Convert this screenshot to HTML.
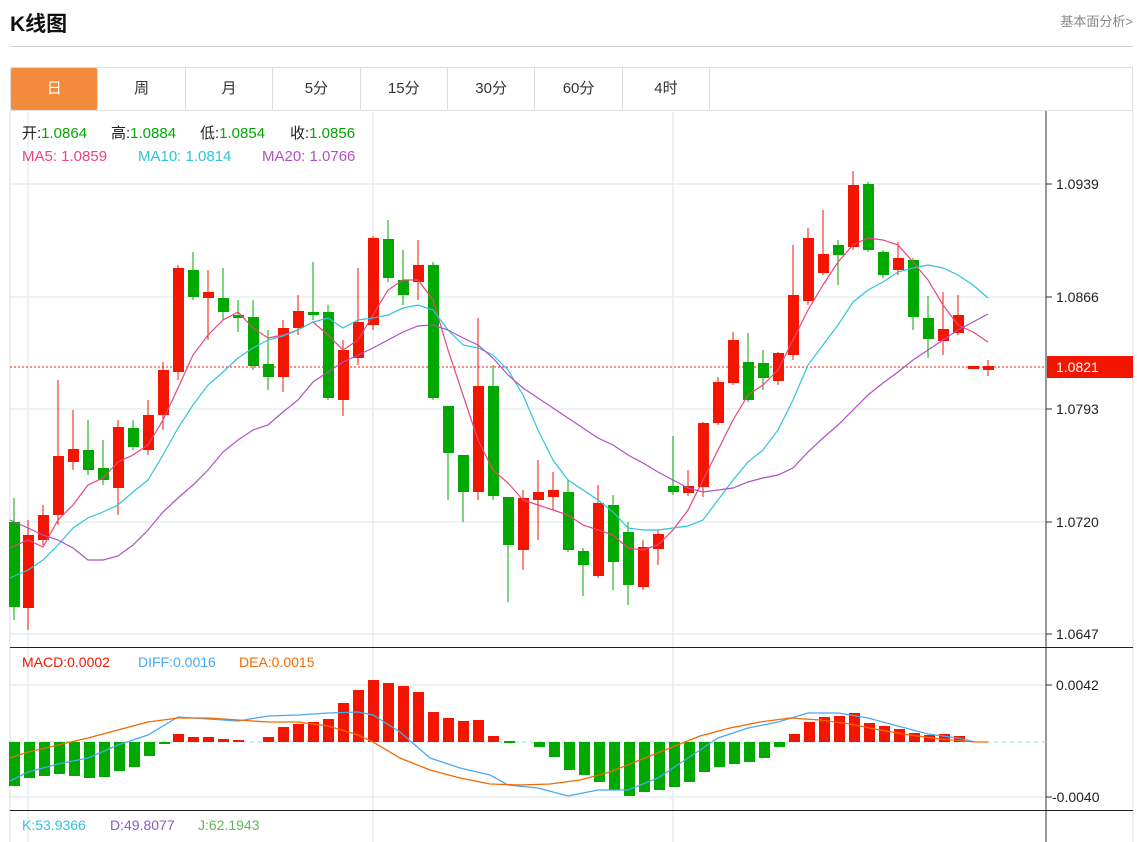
<!DOCTYPE html>
<html><head><meta charset="utf-8"><style>
body{margin:0;width:1137px;height:842px;overflow:hidden;background:#fff;font-family:"Liberation Sans","Noto Sans CJK SC",sans-serif;position:relative}
.t{position:absolute;left:10px;top:8px;font-size:21px;font-weight:bold;color:#111}
.more{position:absolute;right:4px;top:11px;font-size:13px;color:#888}
.hr{position:absolute;left:10px;right:4px;top:46px;border-top:1px solid #d0d0d0}
.tabs{position:absolute;left:10px;top:67px;width:1123px;height:44px;border:1px solid #ddd;border-bottom:1px solid #e2e2e2;box-sizing:border-box;display:flex}
.tabs div{width:87.4px;box-sizing:border-box;border-right:1px solid #ddd;text-align:center;line-height:42px;font-size:15px;color:#333}
.tabs .a{background:#f28b3c;color:#fff;border-radius:2px}
svg{position:absolute;left:0;top:0}
svg text{font-family:"Liberation Sans","Noto Sans CJK SC",sans-serif}
.g rect{fill:#00a800}.g line{stroke:#00a800}
.r rect{fill:#f21500}.r line{stroke:#f21500}
</style></head><body>
<div class="t">K线图</div><div class="more">基本面分析&gt;</div><div class="hr"></div>
<div class="tabs"><div class="a">日</div><div>周</div><div>月</div><div>5分</div><div>15分</div><div>30分</div><div>60分</div><div>4时</div></div>
<svg width="1137" height="842">
<g stroke="#e6edf3" stroke-width="1.5">
<line x1="10" x2="1046" y1="184" y2="184"/><line x1="10" x2="1046" y1="297" y2="297"/><line x1="10" x2="1046" y1="409" y2="409"/><line x1="10" x2="1046" y1="522" y2="522"/><line x1="10" x2="1046" y1="634" y2="634"/>
<line x1="10" x2="1046" y1="685" y2="685"/><line x1="10" x2="1046" y1="797" y2="797"/>
<line x1="28" x2="28" y1="112" y2="842"/><line x1="373" x2="373" y1="112" y2="842"/><line x1="673" x2="673" y1="112" y2="842"/>
</g>
<line x1="10" x2="10" y1="111" y2="842" stroke="#ddd"/>
<line x1="1046" x2="1046" y1="111" y2="842" stroke="#333"/>
<line x1="1133" x2="1133" y1="111" y2="842" stroke="#ddd"/>
<line x1="10" x2="1133" y1="647.5" y2="647.5" stroke="#222"/>
<line x1="10" x2="1133" y1="810.5" y2="810.5" stroke="#222"/>
<g font-size="14" fill="#222">
<line x1="1046" x2="1052" y1="184" y2="184" stroke="#333"/><text x="1056" y="189">1.0939</text>
<line x1="1046" x2="1052" y1="297" y2="297" stroke="#333"/><text x="1056" y="302">1.0866</text>
<line x1="1046" x2="1052" y1="409" y2="409" stroke="#333"/><text x="1056" y="414">1.0793</text>
<line x1="1046" x2="1052" y1="522" y2="522" stroke="#333"/><text x="1056" y="527">1.0720</text>
<line x1="1046" x2="1052" y1="634" y2="634" stroke="#333"/><text x="1056" y="639">1.0647</text>
<line x1="1046" x2="1052" y1="685" y2="685" stroke="#333"/><text x="1056" y="690">0.0042</text>
<line x1="1046" x2="1052" y1="797" y2="797" stroke="#333"/><text x="1052" y="802">-0.0040</text>
</g>
<line x1="10" x2="1046" y1="367" y2="367" stroke="#f21500" stroke-dasharray="2,2"/>
<rect x="1047" y="356" width="86" height="22" fill="#f21500"/><text x="1056" y="372" font-size="14" fill="#fff">1.0821</text>
<g font-size="15">
<text x="22" y="138" fill="#222">开:<tspan fill="#00a800">1.0864</tspan></text>
<text x="111" y="138" fill="#222">高:<tspan fill="#00a800">1.0884</tspan></text>
<text x="200" y="138" fill="#222">低:<tspan fill="#00a800">1.0854</tspan></text>
<text x="290" y="138" fill="#222">收:<tspan fill="#00a800">1.0856</tspan></text>
<text x="22" y="161" fill="#e9457e">MA5: 1.0859</text>
<text x="138" y="161" fill="#2fc4dc">MA10: 1.0814</text>
<text x="262" y="161" fill="#b150c5">MA20: 1.0766</text></g>
<g font-size="14"><text x="22" y="667" fill="#f21500">MACD:0.0002</text><text x="138" y="667" fill="#4aa8f0">DIFF:0.0016</text><text x="239" y="667" fill="#f26a00">DEA:0.0015</text>
<text x="22" y="830" fill="#2fc4dc">K:53.9366</text><text x="110" y="830" fill="#8a5cc6">D:49.8077</text><text x="198" y="830" fill="#5cb85c">J:62.1943</text></g>
<g class="g"><line x1="14" x2="14" y1="498" y2="620"/><rect x="9" y="522" width="11" height="85"/>
<line x1="88" x2="88" y1="420" y2="475"/><rect x="83" y="450" width="11" height="20"/>
<line x1="103" x2="103" y1="440" y2="485"/><rect x="98" y="468" width="11" height="12"/>
<line x1="133" x2="133" y1="420" y2="450"/><rect x="128" y="428" width="11" height="19"/>
<line x1="193" x2="193" y1="252" y2="300"/><rect x="188" y="270" width="11" height="27"/>
<line x1="223" x2="223" y1="268" y2="320"/><rect x="218" y="298" width="11" height="14"/>
<line x1="238" x2="238" y1="300" y2="332"/><rect x="233" y="315" width="11" height="3"/>
<line x1="253" x2="253" y1="300" y2="370"/><rect x="248" y="317" width="11" height="49"/>
<line x1="268" x2="268" y1="330" y2="390"/><rect x="263" y="364" width="11" height="13"/>
<line x1="313" x2="313" y1="262" y2="320"/><rect x="308" y="312" width="11" height="3"/>
<line x1="328" x2="328" y1="305" y2="400"/><rect x="323" y="312" width="11" height="86"/>
<line x1="388" x2="388" y1="220" y2="282"/><rect x="383" y="239" width="11" height="39"/>
<line x1="403" x2="403" y1="250" y2="305"/><rect x="398" y="280" width="11" height="15"/>
<line x1="433" x2="433" y1="262" y2="400"/><rect x="428" y="265" width="11" height="133"/>
<line x1="448" x2="448" y1="406" y2="500"/><rect x="443" y="406" width="11" height="47"/>
<line x1="463" x2="463" y1="455" y2="522"/><rect x="458" y="455" width="11" height="37"/>
<line x1="493" x2="493" y1="365" y2="500"/><rect x="488" y="386" width="11" height="110"/>
<line x1="508" x2="508" y1="497" y2="602"/><rect x="503" y="497" width="11" height="48"/>
<line x1="568" x2="568" y1="480" y2="552"/><rect x="563" y="492" width="11" height="58"/>
<line x1="583" x2="583" y1="548" y2="596"/><rect x="578" y="551" width="11" height="14"/>
<line x1="613" x2="613" y1="495" y2="590"/><rect x="608" y="505" width="11" height="57"/>
<line x1="628" x2="628" y1="522" y2="605"/><rect x="623" y="532" width="11" height="53"/>
<line x1="673" x2="673" y1="436" y2="495"/><rect x="668" y="486" width="11" height="6"/>
<line x1="748" x2="748" y1="333" y2="402"/><rect x="743" y="362" width="11" height="38"/>
<line x1="763" x2="763" y1="350" y2="390"/><rect x="758" y="363" width="11" height="15"/>
<line x1="838" x2="838" y1="240" y2="285"/><rect x="833" y="245" width="11" height="10"/>
<line x1="868" x2="868" y1="182" y2="252"/><rect x="863" y="184" width="11" height="66"/>
<line x1="883" x2="883" y1="250" y2="278"/><rect x="878" y="252" width="11" height="23"/>
<line x1="913" x2="913" y1="258" y2="330"/><rect x="908" y="260" width="11" height="57"/>
<line x1="928" x2="928" y1="296" y2="358"/><rect x="923" y="318" width="11" height="21"/>
</g>
<g class="r"><line x1="28" x2="28" y1="520" y2="630"/><rect x="23" y="535" width="11" height="73"/>
<line x1="43" x2="43" y1="505" y2="545"/><rect x="38" y="515" width="11" height="25"/>
<line x1="58" x2="58" y1="380" y2="525"/><rect x="53" y="456" width="11" height="59"/>
<line x1="73" x2="73" y1="410" y2="470"/><rect x="68" y="449" width="11" height="13"/>
<line x1="118" x2="118" y1="420" y2="515"/><rect x="113" y="427" width="11" height="61"/>
<line x1="148" x2="148" y1="400" y2="455"/><rect x="143" y="415" width="11" height="35"/>
<line x1="163" x2="163" y1="362" y2="430"/><rect x="158" y="370" width="11" height="45"/>
<line x1="178" x2="178" y1="265" y2="380"/><rect x="173" y="268" width="11" height="104"/>
<line x1="208" x2="208" y1="270" y2="340"/><rect x="203" y="292" width="11" height="6"/>
<line x1="283" x2="283" y1="320" y2="392"/><rect x="278" y="328" width="11" height="49"/>
<line x1="298" x2="298" y1="295" y2="335"/><rect x="293" y="311" width="11" height="17"/>
<line x1="343" x2="343" y1="340" y2="416"/><rect x="338" y="350" width="11" height="50"/>
<line x1="358" x2="358" y1="268" y2="365"/><rect x="353" y="322" width="11" height="36"/>
<line x1="373" x2="373" y1="236" y2="330"/><rect x="368" y="238" width="11" height="87"/>
<line x1="418" x2="418" y1="240" y2="300"/><rect x="413" y="265" width="11" height="17"/>
<line x1="478" x2="478" y1="318" y2="500"/><rect x="473" y="386" width="11" height="106"/>
<line x1="523" x2="523" y1="490" y2="570"/><rect x="518" y="498" width="11" height="52"/>
<line x1="538" x2="538" y1="460" y2="540"/><rect x="533" y="492" width="11" height="8"/>
<line x1="553" x2="553" y1="472" y2="510"/><rect x="548" y="490" width="11" height="7"/>
<line x1="598" x2="598" y1="485" y2="578"/><rect x="593" y="503" width="11" height="73"/>
<line x1="643" x2="643" y1="540" y2="590"/><rect x="638" y="547" width="11" height="40"/>
<line x1="658" x2="658" y1="530" y2="565"/><rect x="653" y="534" width="11" height="15"/>
<line x1="688" x2="688" y1="470" y2="496"/><rect x="683" y="486" width="11" height="7"/>
<line x1="703" x2="703" y1="422" y2="497"/><rect x="698" y="423" width="11" height="64"/>
<line x1="718" x2="718" y1="377" y2="425"/><rect x="713" y="382" width="11" height="41"/>
<line x1="733" x2="733" y1="332" y2="385"/><rect x="728" y="340" width="11" height="43"/>
<line x1="778" x2="778" y1="352" y2="385"/><rect x="773" y="353" width="11" height="28"/>
<line x1="793" x2="793" y1="245" y2="360"/><rect x="788" y="295" width="11" height="60"/>
<line x1="808" x2="808" y1="228" y2="305"/><rect x="803" y="238" width="11" height="63"/>
<line x1="823" x2="823" y1="210" y2="275"/><rect x="818" y="254" width="11" height="19"/>
<line x1="853" x2="853" y1="171" y2="250"/><rect x="848" y="185" width="11" height="62"/>
<line x1="898" x2="898" y1="242" y2="275"/><rect x="893" y="258" width="11" height="12"/>
<line x1="943" x2="943" y1="292" y2="355"/><rect x="938" y="329" width="11" height="12"/>
<line x1="958" x2="958" y1="295" y2="335"/><rect x="953" y="315" width="11" height="18"/>
<rect x="968" y="366" width="11" height="3"/>
<line x1="988" x2="988" y1="360" y2="376"/><rect x="983" y="366" width="11" height="4"/>
</g>
<g fill="none" stroke-width="1.2">
<polyline stroke="#e9457e" points="10,548 28,540 43,547 58,520 73,505 88,485 103,478 118,462 133,455 148,445 163,420 178,388 193,355 208,335 223,320 238,312 253,328 268,338 283,335 298,330 313,322 328,335 343,350 358,340 373,315 388,290 403,280 418,280 433,300 448,350 463,395 478,440 493,470 508,483 523,500 538,505 553,510 568,515 583,525 598,530 613,535 628,548 643,550 658,545 673,530 688,510 703,480 718,450 733,420 748,395 763,385 778,370 793,340 808,310 823,285 838,262 853,245 868,238 883,240 898,245 913,262 928,280 943,305 958,325 973,332 988,342"/>
<polyline stroke="#2fc4dc" points="10,578 28,570 43,560 58,545 73,528 88,518 103,512 118,505 133,492 148,480 163,455 178,428 193,405 208,385 223,372 238,358 253,348 268,340 283,336 298,330 313,322 328,318 343,328 358,320 373,318 388,315 403,308 418,305 433,310 448,330 463,345 478,348 493,355 508,370 523,395 538,430 553,460 568,480 583,490 598,500 613,512 628,528 643,530 658,530 673,528 688,526 703,520 718,500 733,480 748,462 763,450 778,430 793,400 808,365 823,345 838,325 853,302 868,290 883,282 898,272 913,268 928,265 943,268 958,275 973,285 988,298"/>
<polyline stroke="#b150c5" points="10,520 28,528 43,535 58,540 73,548 88,560 103,560 118,556 133,545 148,530 163,512 178,498 193,485 208,470 223,452 238,440 253,430 268,425 283,412 298,400 313,382 328,372 343,362 358,355 373,348 388,340 403,332 418,326 433,325 448,330 463,338 478,345 493,358 508,375 523,388 538,398 553,408 568,418 583,428 598,438 613,445 628,455 643,463 658,472 673,480 688,488 703,492 718,490 733,488 748,482 763,478 778,475 793,468 808,452 823,438 838,425 853,410 868,395 883,383 898,372 913,360 928,350 943,340 958,330 973,322 988,314"/>
</g>
<line x1="10" x2="1046" y1="742" y2="742" stroke="#9dd6f0" stroke-dasharray="4,4"/>
<g class="g">
<rect x="9" y="742" width="11" height="44"/><rect x="24" y="742" width="11" height="36"/><rect x="39" y="742" width="11" height="34"/><rect x="54" y="742" width="11" height="32"/><rect x="69" y="742" width="11" height="34"/><rect x="84" y="742" width="11" height="36"/><rect x="99" y="742" width="11" height="35"/><rect x="114" y="742" width="11" height="29"/><rect x="129" y="742" width="11" height="25"/><rect x="144" y="742" width="11" height="14"/><rect x="159" y="742" width="11" height="2"/>
<rect x="504" y="741" width="11" height="2"/><rect x="534" y="742" width="11" height="5"/><rect x="549" y="742" width="11" height="15"/><rect x="564" y="742" width="11" height="28"/><rect x="579" y="742" width="11" height="33"/><rect x="594" y="742" width="11" height="40"/><rect x="609" y="742" width="11" height="48"/><rect x="624" y="742" width="11" height="54"/><rect x="639" y="742" width="11" height="50"/><rect x="654" y="742" width="11" height="48"/><rect x="669" y="742" width="11" height="45"/><rect x="684" y="742" width="11" height="40"/><rect x="699" y="742" width="11" height="30"/><rect x="714" y="742" width="11" height="25"/><rect x="729" y="742" width="11" height="22"/><rect x="744" y="742" width="11" height="20"/><rect x="759" y="742" width="11" height="16"/><rect x="774" y="742" width="11" height="5"/>
</g>
<g class="r">
<rect x="173" y="734" width="11" height="8"/><rect x="188" y="737" width="11" height="5"/><rect x="203" y="737" width="11" height="5"/><rect x="218" y="739" width="11" height="3"/><rect x="233" y="740" width="11" height="2"/><rect x="263" y="737" width="11" height="5"/><rect x="278" y="727" width="11" height="15"/><rect x="293" y="724" width="11" height="18"/><rect x="308" y="722" width="11" height="20"/><rect x="323" y="719" width="11" height="23"/><rect x="338" y="703" width="11" height="39"/><rect x="353" y="690" width="11" height="52"/><rect x="368" y="680" width="11" height="62"/><rect x="383" y="683" width="11" height="59"/><rect x="398" y="686" width="11" height="56"/><rect x="413" y="692" width="11" height="50"/><rect x="428" y="712" width="11" height="30"/><rect x="443" y="718" width="11" height="24"/><rect x="458" y="721" width="11" height="21"/><rect x="473" y="720" width="11" height="22"/><rect x="488" y="736" width="11" height="6"/>
<rect x="789" y="734" width="11" height="8"/><rect x="804" y="722" width="11" height="20"/><rect x="819" y="717" width="11" height="25"/><rect x="834" y="716" width="11" height="26"/><rect x="849" y="713" width="11" height="29"/><rect x="864" y="723" width="11" height="19"/><rect x="879" y="726" width="11" height="16"/><rect x="894" y="729" width="11" height="13"/><rect x="909" y="733" width="11" height="9"/><rect x="924" y="735" width="11" height="7"/><rect x="939" y="734" width="11" height="8"/><rect x="954" y="736" width="11" height="6"/>
</g>
<g fill="none" stroke-width="1.3">
<polyline stroke="#4aa8f0" points="10,781 28,772 58,764 88,758 118,745 148,735 178,717 208,719 238,721 268,716 298,715 328,713 358,712 373,715 400,732 430,758 460,768 490,775 508,785 538,788 568,796 598,790 628,790 658,778 688,758 718,738 748,728 778,722 808,713 838,713 868,718 898,726 928,734 958,738 975,742"/>
<polyline stroke="#f26a00" points="10,758 28,752 58,745 88,738 118,730 148,722 178,718 208,718 238,720 268,722 298,722 328,726 358,735 373,742 400,758 430,770 460,778 490,784 520,785 550,784 580,780 610,772 640,760 670,748 700,736 730,728 760,722 790,718 820,720 850,724 880,730 910,735 940,739 975,742 988,742"/>
</g>
</svg>
</body></html>
